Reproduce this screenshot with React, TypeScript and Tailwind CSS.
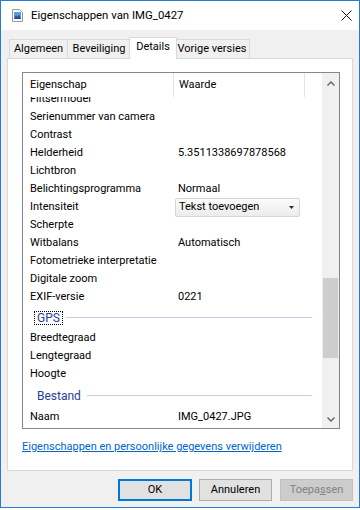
type Row = { k: string; v?: string; combo?: boolean };

const rowsA: Row[] = [
  { k: "Serienummer van camera" },
  { k: "Contrast" },
  { k: "Helderheid", v: "5.3511338697878568" },
  { k: "Lichtbron" },
  { k: "Belichtingsprogramma", v: "Normaal" },
  { k: "Intensiteit", combo: true },
  { k: "Scherpte" },
  { k: "Witbalans", v: "Automatisch" },
  { k: "Fotometrieke interpretatie" },
  { k: "Digitale zoom" },
  { k: "EXIF-versie", v: "0221" },
];

const rowsGps: Row[] = [{ k: "Breedtegraad" }, { k: "Lengtegraad" }, { k: "Hoogte" }];

function PropRow({ row }: { row: Row }) {
  return (
    <div className="h-[18px] flex items-center shrink-0">
      <div className="w-[150px] pl-[7px] whitespace-nowrap">{row.k}</div>
      {row.combo ? (
        <div className="ml-[2px] w-[125px] h-[19px] border border-[#d5d5d5] rounded-[2px] bg-gradient-to-b from-[#fbfbfb] to-[#ececec] flex items-center pl-[3px] pr-[5px]">
          <span>Tekst toevoegen</span>
          <svg className="ml-auto" width="5" height="3" viewBox="0 0 5 3">
            <path d="M0 0 H5 L2.5 3 Z" fill="#1f2e4d" />
          </svg>
        </div>
      ) : (
        <div className="pl-[5px] whitespace-nowrap">{row.v}</div>
      )}
    </div>
  );
}

function Group({ label, focus, h }: { label: string; focus?: boolean; h: string }) {
  return (
    <div className={`${h} flex items-center shrink-0 pl-[11px] pr-[10px]`}>
      <span
        className={`px-[2px] leading-[12px] text-[#1e3f96] text-[12px] ${
          focus ? "border border-dotted border-black" : "border border-transparent"
        }`}
      >
        {label}
      </span>
      <div className="flex-1 ml-[3px] h-px bg-[#c4d0e2]" />
    </div>
  );
}

export default function App() {
  return (
    <div className="w-[360px] h-[510px] bg-white font-['Roboto',sans-serif] text-[11px] text-black">
      <div className="w-[360px] h-[508px] border border-[#2a7bd3] flex flex-col bg-[#f0f0f0]">
        {/* title bar */}
        <div className="h-[29px] bg-white flex items-center pl-[11px] pr-[6px] shrink-0">
          <svg width="11" height="13" viewBox="0 0 11 13">
            <path d="M0.5 0.5 H7.5 L10.5 3.5 V12.5 H0.5 Z" fill="#fff" stroke="#9a9a9a" />
            <rect x="2" y="3" width="7" height="7" fill="#5b9de0" />
            <path d="M2 10 L4 6 L5.5 8 L7 5.5 L9 10 Z" fill="#1f4e9a" />
          </svg>
          <span className="ml-[8px] text-[11.4px] leading-none">Eigenschappen van IMG_0427</span>
          <svg className="ml-auto mr-[1px]" width="11" height="11" viewBox="0 0 11 11">
            <path d="M0.5 0.5 L10.5 10.5 M10.5 0.5 L0.5 10.5" stroke="#111" strokeWidth="1" />
          </svg>
        </div>

        {/* body */}
        <div className="flex-1 flex flex-col px-[6px] pt-[7px]">
          {/* tabs */}
          <div className="flex items-end h-[22px] ml-[2px] -mb-px relative z-10 text-[11px]">
            <div className="h-[20px] w-[59px] border border-[#d9d9d9] bg-[#f0f0f0] flex items-center justify-center">
              Algemeen
            </div>
            <div className="h-[20px] w-[63px] border border-l-0 border-[#d9d9d9] bg-[#f0f0f0] flex items-center justify-center">
              Beveiliging
            </div>
            <div className="h-[22px] w-[48px] -mx-[2px] relative z-10 border border-b-0 border-[#d9d9d9] bg-white flex items-center justify-center pb-[2px]">
              Details
            </div>
            <div className="h-[20px] w-[75px] border border-l-0 border-[#d9d9d9] bg-[#f0f0f0] flex items-center justify-center">
              Vorige versies
            </div>
          </div>

          {/* panel */}
          <div className="h-[413px] border border-[#d9d9d9] bg-white flex flex-col">
            {/* list view */}
            <div className="mt-[13px] ml-[14px] w-[318px] h-[357px] border border-[#828790] flex">
              <div className="w-[299px] flex flex-col overflow-hidden">
                <div className="h-[24px] flex items-center shrink-0 relative z-10 bg-white">
                  <div className="w-[150px] pl-[7px]">Eigenschap</div>
                  <div className="w-px h-[24px] bg-[#e5e5e5]" />
                  <div className="w-[130px] pl-[5px]">Waarde</div>
                  <div className="w-px h-[24px] bg-[#e5e5e5]" />
                </div>
                <div className="flex flex-col -mt-[7px]">
                  <PropRow row={{ k: "Flitsermodel" }} />
                  {rowsA.map((r) => (
                    <PropRow key={r.k} row={r} />
                  ))}
                  <Group label="GPS" focus h="h-[23px]" />
                  {rowsGps.map((r) => (
                    <PropRow key={r.k} row={r} />
                  ))}
                  <Group label="Bestand" h="h-[25px]" />
                  <PropRow row={{ k: "Naam", v: "IMG_0427.JPG" }} />
                </div>
              </div>
              {/* scrollbar */}
              <div className="w-[17px] bg-[#f0f0f0] flex flex-col">
                <div className="h-[17px] flex items-center justify-center pt-[3px]">
                  <svg width="8" height="5" viewBox="0 0 8 5">
                    <path d="M0.5 4.5 L4 1 L7.5 4.5" fill="none" stroke="#606060" strokeWidth="1.3" />
                  </svg>
                </div>
                <div className="h-[188px]" />
                <div className="h-[80px] mx-[1px] bg-[#cdcdcd]" />
                <div className="flex-1" />
                <div className="h-[17px] flex items-center justify-center">
                  <svg width="8" height="5" viewBox="0 0 8 5">
                    <path d="M0.5 0.5 L4 4 L7.5 0.5" fill="none" stroke="#606060" strokeWidth="1.3" />
                  </svg>
                </div>
              </div>
            </div>

            <div className="mt-[11px] ml-[14px] leading-[14px]">
              <span className="text-[#0066cc] underline underline-offset-[1px]">
                Eigenschappen en persoonlijke gegevens verwijderen
              </span>
            </div>
          </div>

          {/* buttons */}
          <div className="mt-[8px] flex justify-end gap-[7px]">
            <div className="w-[74px] h-[22px] border-2 border-[#0078d7] bg-[#e1e1e1] flex items-center justify-center">
              OK
            </div>
            <div className="w-[73px] h-[22px] border border-[#adadad] bg-[#e1e1e1] flex items-center justify-center">
              Annuleren
            </div>
            <div className="ml-px w-[73px] h-[22px] border border-[#bfbfbf] bg-[#cccccc] text-[#838383] flex items-center justify-center">
              Toepa<span className="underline">s</span>sen
            </div>
          </div>
        </div>
      </div>
    </div>
  );
}
